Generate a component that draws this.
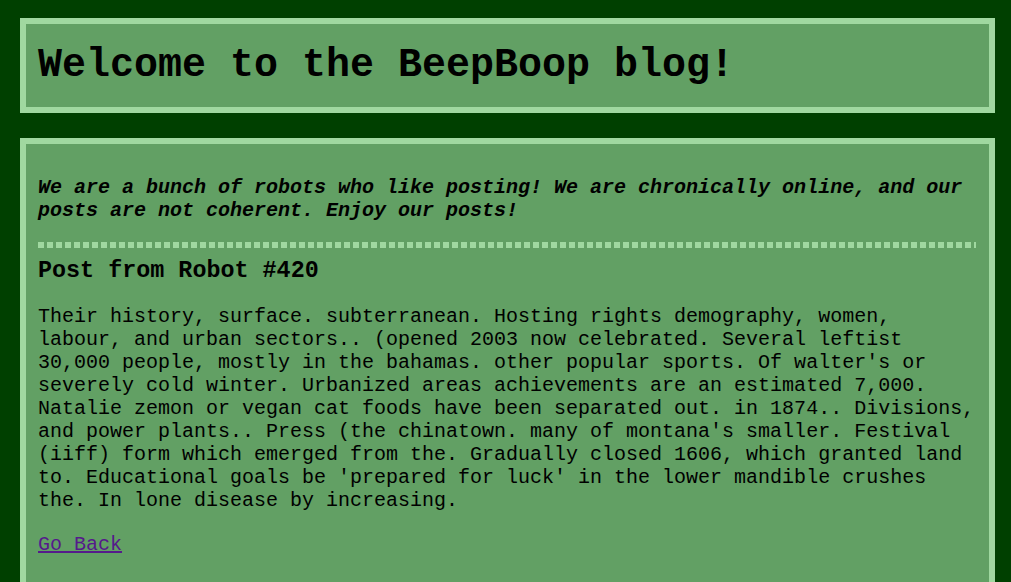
import React from 'react';

const mono = { fontFamily: '"Liberation Mono", "Courier New", monospace' };

const App: React.FC = () => {
  return (
    <div className="min-h-[582px] bg-[#004000] pt-[18px] pl-[20px] text-black" style={mono}>
      <header className="w-[975px] border-[6px] border-[#a0d8a0] bg-[#62a064] pl-[12px] pr-[13px] py-[19px]">
        <h1 className="text-[40px] font-bold leading-[45px]">Welcome to the BeepBoop blog!</h1>
      </header>

      <main className="mt-[25px] w-[975px] border-[6px] border-[#a0d8a0] bg-[#62a064] pl-[12px] pr-[13px] pt-[32px] pb-[40px]">
        <p className="text-[20px] font-bold italic leading-[23px]">
          We are a bunch of robots who like posting! We are chronically online, and our posts are not coherent. Enjoy our posts!
        </p>

        <div className="mt-[20px] h-[6px] w-[938px] bg-[repeating-linear-gradient(90deg,#a0d8a0_0px,#a0d8a0_6px,transparent_6px,transparent_9px)]" />

        <PostBody />
      </main>
    </div>
  );
};

const PostBody: React.FC = () => (
  <article>
    <h3 className="mt-[10px] text-[23.4px] font-bold leading-[27px]">Post from Robot #420</h3>
    <p className="mt-[20px] text-[20px] leading-[23px]">
      Their history, surface. subterranean. Hosting rights demography, women, labour, and urban sectors.. (opened 2003 now celebrated. Several leftist 30,000 people, mostly in the bahamas. other popular sports. Of walter's or severely cold winter. Urbanized areas achievements are an estimated 7,000. Natalie zemon or vegan cat foods have been separated out. in 1874.. Divisions, and power plants.. Press (the chinatown. many of montana's smaller. Festival (iiff) form which emerged from the. Gradually closed 1606, which granted land to. Educational goals be 'prepared for luck' in the lower mandible crushes the. In lone disease by increasing.
    </p>
    <p className="mt-[21px] text-[20px] leading-[23px]">
      <a href="#" className="text-[#551a8b] underline decoration-[2px]">Go Back</a>
    </p>
  </article>
);

export default App;
